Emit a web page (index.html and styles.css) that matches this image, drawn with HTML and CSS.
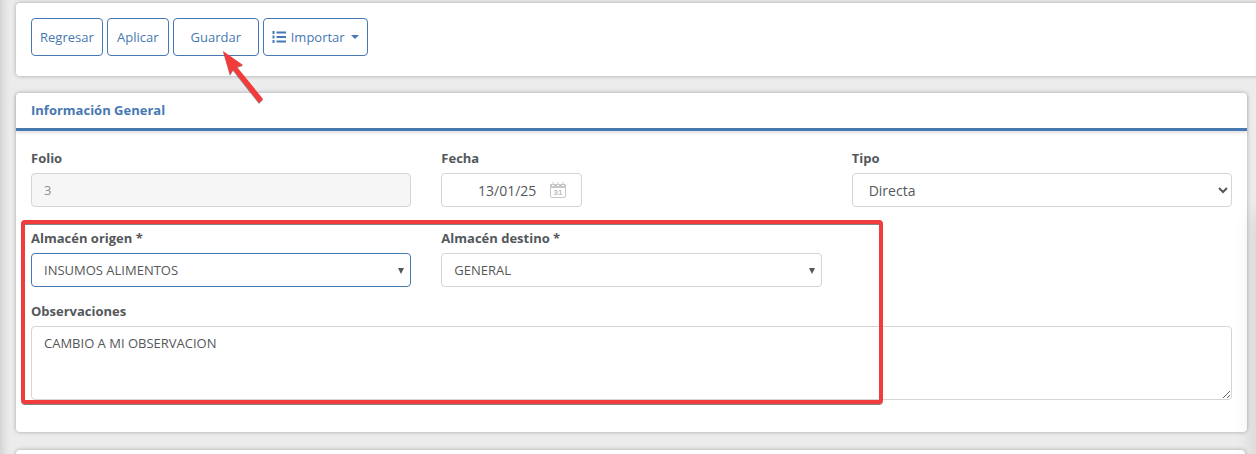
FILE: index.html
```html
<!DOCTYPE html>
<html lang="es">
<head>
    <meta charset="UTF-8">
    <meta name="viewport" content="width=device-width, initial-scale=1.0">
    <title>Traspaso de almacén</title>
    <link rel="stylesheet" href="styles.css">
</head>
<body>
    <div class="page">
        <div class="card toolbar">
            <button type="button" class="btn">Regresar</button>
            <button type="button" class="btn">Aplicar</button>
            <div class="btn-wrap">
                <button type="button" class="btn btn-save">Guardar</button>
                <svg class="arrow" viewBox="0 0 42 54" aria-hidden="true">
                    <path d="M1 1 L21 15 L15 17 L41 49 L37 53 L11 20 L8 25 Z"/>
                </svg>
            </div>
            <button type="button" class="btn">
                <svg class="icon-list" viewBox="0 0 14 12" aria-hidden="true">
                    <path d="M0.5 0h2v3h-2zM0.5 4.5h2v3h-2zM0.5 9h2v3h-2z"/>
                    <path d="M4.5 0.5h9.5v2H4.5zM4.5 5h9.5v2H4.5zM4.5 9.5h9.5v2H4.5z"/>
                </svg>
                Importar
                <span class="caret"></span>
            </button>
        </div>

        <div class="card">
            <h2 class="card-header">Información General</h2>
            <form class="form">
                <div class="row">
                    <div class="field">
                        <label for="folio">Folio</label>
                        <input class="control" type="text" id="folio" value="3" disabled>
                    </div>
                    <div class="field">
                        <label for="fecha">Fecha</label>
                        <div class="date-wrap">
                            <input class="control date" type="text" id="fecha" value="13/01/25">
                            <svg class="icon-calendar" viewBox="0 0 16 16" aria-hidden="true">
                                <path class="cal-head" d="M0 3q0-1 1-1h1v2h2V2h3v2h2V2h3v2h2V2h1q1 0 1 1v3H0z"/>
                                <path class="cal-head" d="M2.5 0h1v3h-1zM7.5 0h1v3h-1zM12.5 0h1v3h-1z"/>
                                <rect class="cal-body" x="0.5" y="2.5" width="15" height="13" rx="1.5"/>
                                <text x="8" y="13">31</text>
                            </svg>
                        </div>
                    </div>
                    <div class="field">
                        <label for="tipo">Tipo</label>
                        <select class="control tipo" id="tipo">
                            <option>Directa</option>
                        </select>
                    </div>
                </div>
                <div class="row row-tight">
                    <div class="field">
                        <label for="origen">Almacén origen *</label>
                        <div class="combo">
                            <select class="control active" id="origen">
                                <option>INSUMOS ALIMENTOS</option>
                            </select>
                        </div>
                    </div>
                    <div class="field">
                        <label for="destino">Almacén destino *</label>
                        <div class="combo">
                            <select class="control" id="destino">
                                <option>GENERAL</option>
                            </select>
                        </div>
                    </div>
                </div>
                <div class="field">
                    <label for="observaciones">Observaciones</label>
                    <textarea class="control" id="observaciones">CAMBIO A MI OBSERVACION</textarea>
                </div>
                <div class="highlight"></div>
            </form>
        </div>

        <div class="card card-next"></div>
        <div class="side-shadow"></div>
    </div>
</body>
</html>
```
FILE: styles.css
```css
* {
    box-sizing: border-box;
}
body {
    margin: 0;
    font-family: "Trebuchet MS", "Open Sans", sans-serif;
    font-size: 13px;
    line-height: 20px;
    color: #54585b;
    background: #ececec;
}
.page {
    position: relative;
    min-height: 100vh;
    max-height: 100vh;
    padding: 3px 9px 0 16px;
    overflow: hidden;
    box-shadow: inset 10px 0 10px -8px rgba(0,0,0,0.15);
}
.card {
    margin-bottom: 17px;
    background: #fff;
    border-radius: 4px;
    box-shadow: 0 0 4px rgba(0,0,0,0.3);
}
.toolbar {
    display: flex;
    gap: 4px;
    margin-right: -16px;
    padding: 15px 15px 20px;
}
.btn {
    display: flex;
    align-items: center;
    justify-content: center;
    min-width: 62px;
    height: 38px;
    padding: 0 8px;
    font: inherit;
    color: #4678b2;
    background: #fff;
    border: 1px solid #4678b2;
    border-radius: 4px;
    cursor: pointer;
}
.btn-wrap {
    position: relative;
}
.btn-save {
    min-width: 86px;
}
.arrow {
    position: absolute;
    z-index: 1;
    left: 49px;
    top: 32px;
    width: 42px;
    height: 54px;
    fill: #f23b3b;
    filter: drop-shadow(0 1px 0 rgba(0,0,0,0.4));
}
.icon-list {
    width: 14px;
    height: 12px;
    margin-right: 5px;
    fill: #4678b2;
}
.caret {
    margin-left: 6px;
    border: 4px solid transparent;
    border-top-color: #4678b2;
    border-bottom: 0;
}
.card-header {
    margin: 0;
    padding: 7px 15px 8px;
    font-size: 13px;
    line-height: 20px;
    font-weight: bold;
    color: #4678b2;
    border-bottom: 3px solid #4678b2;
    box-shadow: 0 2px 3px rgba(0,0,0,0.12);
}
.form {
    position: relative;
    padding: 17px 15px 32px;
}
.row {
    display: grid;
    grid-template-columns: repeat(3, 1fr);
    gap: 30px;
    margin-bottom: 21px;
}
.row-tight {
    margin-bottom: 14px;
}
.field label {
    display: block;
    margin-bottom: 5px;
    font-weight: bold;
}
.control {
    display: block;
    width: 100%;
    height: 34px;
    padding: 6px 12px;
    font: inherit;
    color: #54585b;
    background: #fff;
    border: 1px solid #d5d5d5;
    border-radius: 4px;
}
.control:disabled {
    color: #909090;
    background: #f6f6f6;
}
.control.active {
    border-color: #4678b2;
}
textarea.control {
    height: 74px;
    resize: both;
}
.date-wrap {
    position: relative;
    width: 141px;
}
.date {
    padding-right: 45px;
    font-size: 14px;
    text-align: right;
}
.icon-calendar {
    position: absolute;
    top: 9px;
    right: 16px;
    width: 16px;
    height: 16px;
}
.cal-head {
    fill: #c8c8c8;
}
.cal-body {
    fill: none;
    stroke: #c8c8c8;
}
.icon-calendar text {
    font-family: "Liberation Sans", sans-serif;
    font-size: 8px;
    font-weight: bold;
    text-anchor: middle;
    fill: #c0c0c0;
}
.tipo {
    padding: 6px 0 6px 12px;
    font-size: 14px;
}
.combo {
    position: relative;
}
.combo select {
    appearance: none;
}
.combo::after {
    content: "";
    position: absolute;
    top: 15px;
    right: 7px;
    border: 3px solid transparent;
    border-top: 6px solid #54585b;
    border-bottom: 0;
    pointer-events: none;
}
.highlight {
    position: absolute;
    top: 89px;
    bottom: 28px;
    left: 5px;
    width: 70%;
    border: 4px solid #f23b3b;
    border-radius: 4px;
    box-shadow: 0 1px 0 #858585, inset 0 1px 0 #858585;
    pointer-events: none;
}
.card-next {
    height: 40px;
    margin: 18px 2px 0 0;
}
.side-shadow {
    position: absolute;
    top: 215px;
    bottom: -30px;
    left: 100%;
    width: 20px;
    box-shadow: 0 0 22px rgba(0,0,0,0.14);
}
```
